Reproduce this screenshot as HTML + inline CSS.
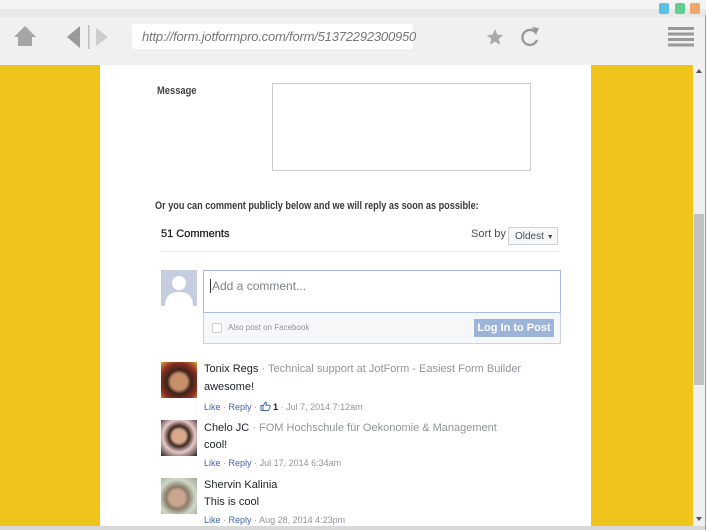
<!DOCTYPE html>
<html><head><meta charset="utf-8"><style>
*{margin:0;padding:0;box-sizing:border-box}
body{width:706px;height:530px;overflow:hidden;background:#f0f0f0;font-family:"Liberation Sans",Arial,sans-serif;position:relative}
.a{position:absolute}
.f{font-size:11px;color:#1d2129}
.lnk{color:#4267b2}
.g{color:#90949c}
</style></head><body>
<div class="a" style="left:0;top:0;width:706px;height:10px;background:#f4f4f4"></div>
<div class="a" style="left:0;top:9px;width:706px;height:8px;background:#e8e8e8"></div>
<div class="a" style="left:659px;top:3px;width:10px;height:11px;background:#5bc0e8;border-radius:2px"></div>
<div class="a" style="left:675px;top:3px;width:10px;height:11px;background:#5fd08f;border-radius:2px"></div>
<div class="a" style="left:690px;top:3px;width:10px;height:11px;background:#f0a86a;border-radius:2px"></div>
<div class="a" style="left:0;top:17px;width:706px;height:48px;background:#f0f0f0"></div>
<svg class="a" style="left:13px;top:25px" width="24" height="22"><path d="M12 1 L23 12 L19 12 L19 21 L5 21 L5 12 L1 12 Z" fill="#a6a6a6"/></svg>
<svg class="a" style="left:64px;top:25px" width="50" height="24"><path d="M16 1 L16 23 L3 12 Z" fill="#999"/><rect x="24" y="0" width="1.5" height="24" fill="#bbb"/><path d="M32 3 L32 21 L44 12 Z" fill="#ccc"/></svg>
<div class="a" style="left:132px;top:24px;width:281px;height:25px;background:#fff;border-radius:3px"></div>
<div class="a" style="left:142px;top:29px;font-size:13px;font-style:italic;color:#777;letter-spacing:-0.2px">http://form.jotformpro.com/form/51372292300950</div>
<svg class="a" style="left:486px;top:28px" width="18" height="18"><path d="M9 1 L11.3 6.6 L17.3 7 L12.7 10.9 L14.1 16.8 L9 13.6 L3.9 16.8 L5.3 10.9 L0.7 7 L6.7 6.6 Z" fill="#aaa"/></svg>
<svg class="a" style="left:520px;top:24px" width="22" height="26"><path d="M16 9 A7.5 7.5 0 1 0 17 16" fill="none" stroke="#999" stroke-width="2.4"/><path d="M12 3 L19 4 L16 11 Z" fill="#999"/></svg>
<svg class="a" style="left:668px;top:27px" width="26" height="20"><rect y="0" width="26" height="3" fill="#999"/><rect y="5.5" width="26" height="3" fill="#999"/><rect y="11" width="26" height="3" fill="#999"/><rect y="16.5" width="26" height="3" fill="#999"/></svg>
<div class="a" style="left:0;top:65px;width:693px;height:461px;background:#f0c41b"></div>
<div class="a" style="left:100px;top:65px;width:491px;height:461px;background:#fff"></div>
<div class="a" style="left:0;top:526px;width:706px;height:4px;background:#d8d8d8"></div>
<div class="a" style="left:693px;top:65px;width:12px;height:461px;background:#f0f0f0"></div>
<div class="a" style="left:705px;top:15px;width:1px;height:515px;background:#999"></div>
<div class="a" style="left:694px;top:214px;width:10px;height:171px;background:#c1c1c1"></div>
<svg class="a" style="left:695px;top:68px" width="8" height="6"><path d="M4 1 L7 5 L1 5 Z" fill="#555"/></svg>
<svg class="a" style="left:695px;top:516px" width="8" height="6"><path d="M1 1 L7 1 L4 5 Z" fill="#555"/></svg>
<div class="a" style="left:157px;top:85px;font-size:11px;font-weight:bold;color:#444;transform:scaleX(.85);transform-origin:left">Message</div>
<div class="a" style="left:272px;top:83px;width:259px;height:88px;border:1px solid #ccc"></div>
<div class="a" style="left:155px;top:200px;font-size:11px;font-weight:bold;color:#3a3a3a;transform:scaleX(.83);transform-origin:left;white-space:nowrap">Or you can comment publicly below and we will reply as soon as possible:</div>
<div class="a" style="left:161px;top:228px;font-size:11px;color:#1d2129;-webkit-text-stroke:0.3px #1d2129">51 Comments</div>
<div class="a" style="left:471px;top:228px;font-size:11px;color:#4b4f56">Sort by</div>
<div class="a" style="left:508px;top:227px;width:50px;height:18px;background:#f6f7f9;border:1px solid #ced0d4;font-size:10px;color:#4b4f56;padding:3px 0 0 6px">Oldest <span style="font-size:7px">▼</span></div>
<div class="a" style="left:161px;top:251px;width:398px;height:1px;background:#e5e5e5"></div>
<div class="a" style="left:161px;top:270px;width:36px;height:36px;background:#c6cddf;overflow:hidden"><svg width="36" height="36"><circle cx="18" cy="13" r="7" fill="#fff"/><path d="M4 36 Q4 22 18 22 Q32 22 32 36 Z" fill="#fff"/></svg></div>
<div class="a" style="left:203px;top:270px;width:358px;height:74px;border:1px solid #ccd2e0"></div>
<div class="a" style="left:203px;top:270px;width:358px;height:43px;border:1px solid #a8bce8;background:#fff"></div>
<div class="a" style="left:204px;top:313px;width:356px;height:30px;background:#f6f7f9"></div>
<div class="a" style="left:210px;top:279px;font-size:12px;color:#7e828b;border-left:1px solid #333;padding-left:1px">Add a comment...</div>
<div class="a" style="left:212px;top:323px;width:10px;height:10px;border:1px solid #ccd0d5;border-radius:2px;background:#fff"></div>
<div class="a" style="left:228px;top:323px;font-size:8px;color:#90949c">Also post on Facebook</div>
<div class="a" style="left:474px;top:319px;width:80px;height:18px;background:#9cb4d8;color:#fff;font-size:11px;font-weight:bold;text-align:center;line-height:18px">Log In to Post</div>
<div class="a" style="left:161px;top:362px;width:36px;height:36px;background:radial-gradient(circle at 50% 55%,#c8906a 0 30%,#3a2418 45%,#8a2f22 70%,#d9a040)"></div>
<div class="a f" style="left:204px;top:363px">Tonix Regs <span class="g">· Technical support at JotForm - Easiest Form Builder</span></div>
<div class="a f" style="left:204px;top:381px">awesome!</div>
<div class="a" style="left:204px;top:401px;font-size:9px"><span class="lnk">Like</span> <span class="g">·</span> <span class="lnk">Reply</span> <span class="g">·</span> <svg width="11" height="10" style="vertical-align:-1px"><path d="M1 4.5 H3 V9.5 H1 Z M3 5 L5.5 1 Q6.5 1 6.3 3 L6 4.3 H9.5 Q10.5 4.5 10 5.7 L8.8 9 Q8.6 9.5 8 9.5 H3" fill="none" stroke="#4267b2" stroke-width="1"/></svg><b style="color:#1d2129"> 1</b> <span class="g">· Jul 7, 2014 7:12am</span></div>
<div class="a" style="left:161px;top:420px;width:36px;height:36px;background:radial-gradient(circle at 50% 45%,#d9a88a 0 25%,#3b2a20 38%,#e8c8c8 60%,#2a2020)"></div>
<div class="a f" style="left:204px;top:422px">Chelo JC <span class="g">· FOM Hochschule für Oekonomie &amp; Management</span></div>
<div class="a f" style="left:204px;top:439px">cool!</div>
<div class="a" style="left:204px;top:458px;font-size:9px"><span class="lnk">Like</span> <span class="g">·</span> <span class="lnk">Reply</span> <span class="g">· Jul 17, 2014 6:34am</span></div>
<div class="a" style="left:161px;top:478px;width:36px;height:36px;background:radial-gradient(circle at 45% 55%,#c9a48e 0 28%,#8a7a6a 40%,#cfd8c8 65%,#9aa890)"></div>
<div class="a f" style="left:204px;top:479px">Shervin Kalinia</div>
<div class="a f" style="left:204px;top:496px">This is cool</div>
<div class="a" style="left:204px;top:515px;font-size:9px"><span class="lnk">Like</span> <span class="g">·</span> <span class="lnk">Reply</span> <span class="g">· Aug 28, 2014 4:23pm</span></div>
</body></html>
